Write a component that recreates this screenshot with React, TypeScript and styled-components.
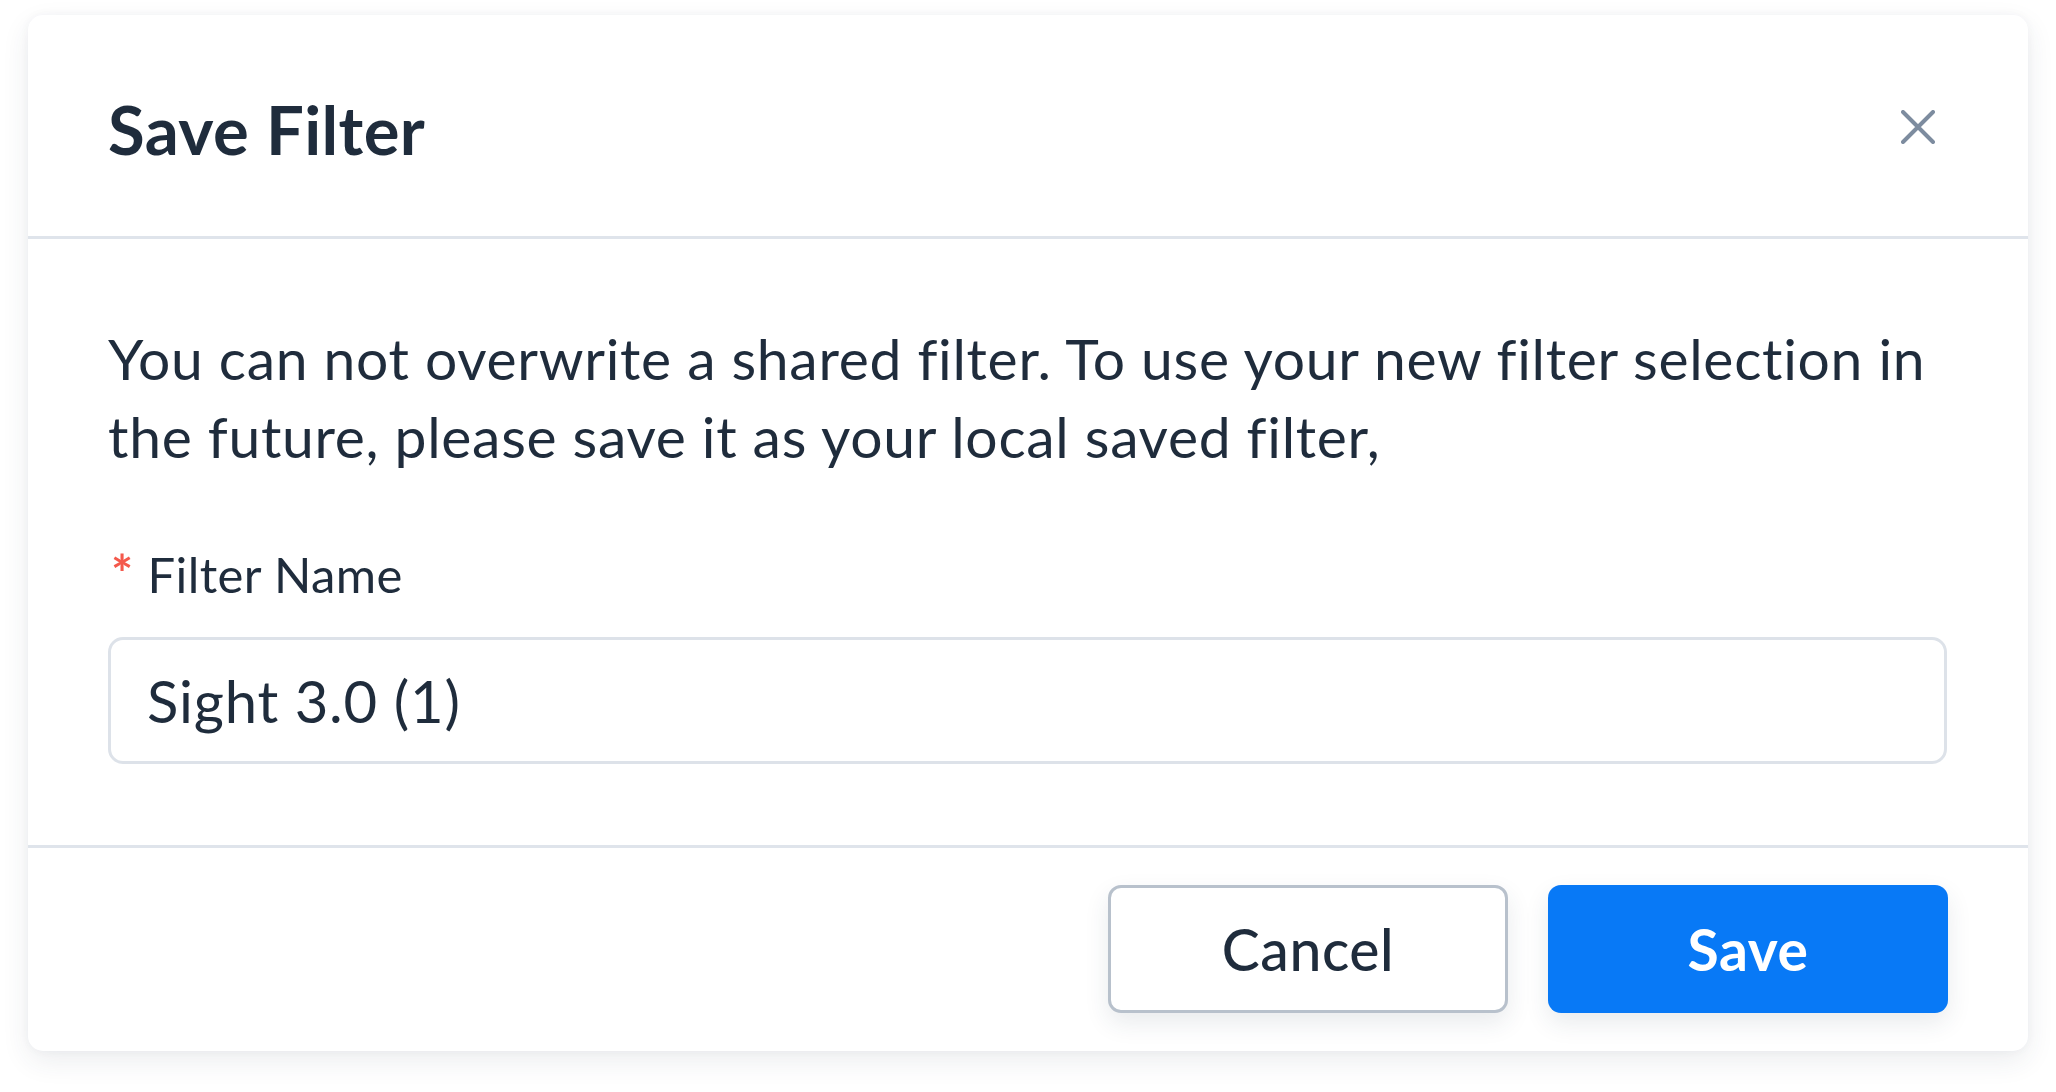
import React from "react";
import styled, { createGlobalStyle } from "styled-components";

const GlobalStyle = createGlobalStyle`
  html, body {
    margin: 0;
    padding: 0;
    background: #ffffff;
  }
  body {
    font-family: "Lato", "Noto Sans", "Liberation Sans", sans-serif;
    color: #1f2c3c;
    -webkit-font-smoothing: antialiased;
  }
  * { box-sizing: border-box; }
`;

const Page = styled.div`
  padding: 15px 28px 40px 28px;
`;

const Dialog = styled.section`
  width: 2000px;
  background: #ffffff;
  border-radius: 15px;
  box-shadow: 0 10px 28px rgba(40, 55, 80, 0.09), 0 0 10px rgba(40, 55, 80, 0.04);
  display: flex;
  flex-direction: column;
`;

const Header = styled.header`
  height: 224px;
  display: flex;
  align-items: center;
  justify-content: space-between;
  padding: 7px 93px 0 80px;
  border-bottom: 3px solid #dfe4eb;
`;

const Title = styled.h2`
  margin: 0;
  font-size: 67px;
  font-weight: 700;
  line-height: 1;
  letter-spacing: 0.4px;
  color: #1f2c3c;
`;

const CloseButton = styled.button`
  width: 34px;
  height: 34px;
  padding: 0;
  border: none;
  background: transparent;
  display: flex;
  align-items: center;
  justify-content: center;
  cursor: pointer;
  margin-top: -4px;
`;

const Body = styled.div`
  padding: 80px 81px 81px 80px;
  display: flex;
  flex-direction: column;
`;

const Message = styled.p`
  margin: 0 0 68px 0;
  font-size: 57px;
  line-height: 78px;
  font-weight: 400;
  letter-spacing: 0.7px;
  color: #1f2c3c;
`;

const Label = styled.label`
  display: flex;
  align-items: baseline;
  gap: 14px;
  font-size: 49px;
  line-height: 60px;
  letter-spacing: 0.4px;
  color: #1f2c3c;
  margin-bottom: 33px;
  padding-left: 3px;
`;

const Asterisk = styled.span`
  color: #f4594c;
  font-size: 52px;
  font-weight: 700;
`;

const Input = styled.input`
  width: 100%;
  height: 127px;
  border: 3px solid #dde2e9;
  border-radius: 15px;
  padding: 0 36px;
  font-family: inherit;
  font-size: 58px;
  letter-spacing: 0.8px;
  color: #1f2c3c;
  background: #ffffff;
  outline: none;
`;

const Footer = styled.footer`
  border-top: 3px solid #dfe4eb;
  padding: 37px 80px 38px 80px;
  display: flex;
  justify-content: flex-end;
  gap: 40px;
`;

const Button = styled.button<{ $primary?: boolean }>`
  width: 400px;
  height: 128px;
  border-radius: 13px;
  font-family: inherit;
  font-size: 57px;
  letter-spacing: 0.6px;
  font-weight: ${(p) => (p.$primary ? 700 : 500)};
  cursor: pointer;
  color: ${(p) => (p.$primary ? "#ffffff" : "#1f2c3c")};
  background: ${(p) => (p.$primary ? "#0879f6" : "#ffffff")};
  border: ${(p) => (p.$primary ? "none" : "3px solid #b8c1cc")};
  box-shadow: 0 10px 24px rgba(40, 55, 80, 0.1);
`;

export default function App() {
  return (
    <>
      <GlobalStyle />
      <Page>
        <Dialog>
          <Header>
            <Title>Save Filter</Title>
            <CloseButton aria-label="Close">
              <svg width="34" height="34" viewBox="0 0 34 34">
                <path
                  d="M2 2 L32 32 M32 2 L2 32"
                  stroke="#7d8c9f"
                  strokeWidth="4"
                  strokeLinecap="round"
                />
              </svg>
            </CloseButton>
          </Header>
          <Body>
            <Message>
              You can not overwrite a shared filter. To use your new filter selection in
              <br />
              the future, please save it as your local saved filter,
            </Message>
            <Label>
              <Asterisk>*</Asterisk>
              Filter Name
            </Label>
            <Input defaultValue="Sight 3.0 (1)" />
          </Body>
          <Footer>
            <Button>Cancel</Button>
            <Button $primary>Save</Button>
          </Footer>
        </Dialog>
      </Page>
    </>
  );
}
